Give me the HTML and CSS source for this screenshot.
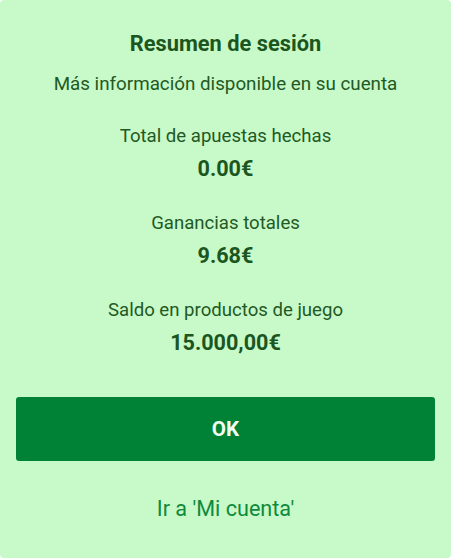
FILE: index.html
```html
<!DOCTYPE html>
<html lang="es">
<head>
<meta charset="utf-8">
<title>Resumen de sesión</title>
<link rel="stylesheet" href="styles.css">
</head>
<body>
<div class="card">
  <h1 class="title">Resumen de sesión</h1>
  <p class="subtitle">Más información disponible en su cuenta</p>
  <div class="stats">
    <div class="stat">
      <div class="stat-label">Total de apuestas hechas</div>
      <div class="stat-value">0.00€</div>
    </div>
    <div class="stat">
      <div class="stat-label">Ganancias totales</div>
      <div class="stat-value">9.68€</div>
    </div>
    <div class="stat">
      <div class="stat-label">Saldo en productos de juego</div>
      <div class="stat-value">15.000,00€</div>
    </div>
  </div>
  <button class="ok-btn" type="button">OK</button>
  <a class="account-link" href="#">Ir a 'Mi cuenta'</a>
</div>
</body>
</html>
```

FILE: styles.css
```css
html, body {
  margin: 0;
  padding: 0;
  background: #ffffff;
}
body {
  font-family: Roboto, "Liberation Sans", sans-serif;
  width: 451px;
  height: 558px;
}
.card {
  box-sizing: border-box;
  width: 451px;
  height: 558px;
  background: #c8f9c8;
  border-radius: 4px;
  padding: 32px 16px 0;
  display: flex;
  flex-direction: column;
  align-items: stretch;
  text-align: center;
  color: #1f5a24;
}
.title {
  margin: 0;
  font-size: 21.8px;
  line-height: 24px;
  font-weight: 700;
  color: #1b5620;
}
.subtitle {
  margin: 16px 0 0;
  font-size: 18.8px;
  line-height: 24px;
  font-weight: 400;
}
.stats {
  margin-top: 28px;
  display: flex;
  flex-direction: column;
  gap: 30px;
}
.stat {
  display: flex;
  flex-direction: column;
  gap: 9px;
}
.stat-label {
  font-size: 18.6px;
  line-height: 24px;
}
.stat-value {
  font-size: 21.6px;
  line-height: 24px;
  font-weight: 700;
  color: #1b5620;
}
.ok-btn {
  margin-top: 42px;
  height: 64px;
  border: none;
  border-radius: 3px;
  background: #008236;
  color: #f2fff2;
  font-family: inherit;
  font-size: 20.6px;
  font-weight: 700;
  cursor: pointer;
}
.account-link {
  margin-top: 36px;
  font-size: 21.6px;
  line-height: 24px;
  color: #0f8a3c;
  text-decoration: none;
}
```
